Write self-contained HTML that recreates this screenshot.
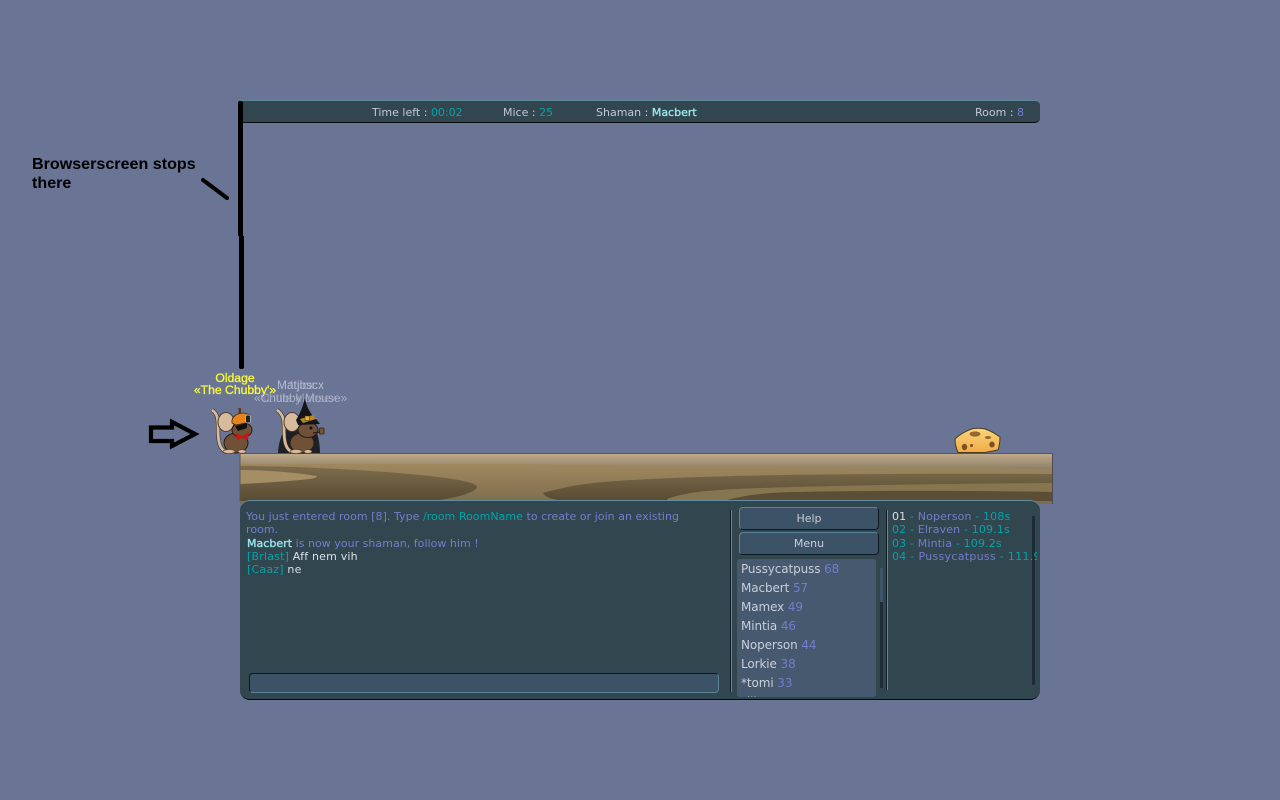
<!DOCTYPE html>
<html><head><meta charset="utf-8"><style>
html,body{margin:0;padding:0;width:1280px;height:800px;overflow:hidden;background:#6a7495}
body{position:relative;font-family:"DejaVu Sans",sans-serif;font-size:11px}
.t{position:absolute;white-space:nowrap;line-height:13px}
.a{position:absolute}
.g{color:#c2c8d6}.c{color:#00a5a7}.b{color:#727dcc}.m{color:#98e6ea;-webkit-text-stroke:.35px #98e6ea}.w{color:#dcdfe8}
.row{position:absolute;left:0;width:139px;height:19px;background:#46596f;border-radius:3px;color:#c8cdda;font-size:12px;letter-spacing:-.1px;line-height:20px;text-indent:4px;white-space:nowrap;overflow:hidden}
.btn{position:absolute;left:739px;width:138px;height:21px;background:#3c5266;border:1px solid #5d8398;border-bottom:1px solid #0c1a22;border-right:1px solid #0c1a22;border-radius:4px;color:#c8cdda;text-align:center;line-height:21px}
.n{font:12.200px/13px "Liberation Sans",sans-serif}
.n2{font:11.900px/13px "Liberation Sans",sans-serif}
</style></head><body>

<!-- top bar -->
<div class="a" style="left:240px;top:100px;width:800px;height:23px;background:#324650;border-top:1px solid #5e8a9e;border-bottom:1px solid #050a0c;border-radius:0 5px 5px 0;box-sizing:border-box"></div>
<div class="t g" style="left:372px;top:106px">Time left : <span class="c">00:02</span></div>
<div class="t g" style="left:503px;top:106px">Mice : <span class="c">25</span></div>
<div class="t g" style="left:596px;top:106px">Shaman : <span class="m">Macbert</span></div>
<div class="t g" style="left:975px;top:106px">Room : <span class="b">8</span></div>

<!-- annotations -->
<div class="a" style="left:238px;top:101px;width:4.500px;height:135px;background:#000;border-radius:2px 2px 0 0"></div>
<div class="a" style="left:239px;top:236px;width:4.500px;height:133px;background:#000;border-radius:0 0 2px 2px"></div>
<div class="t" style="left:32px;top:155px;font:bold 16.100px/19px 'Liberation Sans',sans-serif;color:#000;white-space:normal;width:190px">Browserscreen stops there</div>

<svg class="a" style="left:0;top:0" width="1280" height="800" viewBox="0 0 1280 800">
<line x1="203" y1="180" x2="227" y2="198" stroke="#000" stroke-width="4" stroke-linecap="round"/>
<path d="M151 427.500H172V422L195 434L172 446V441H151Z" fill="none" stroke="#000" stroke-width="4.200"/>

<defs>
<linearGradient id="w" x1="0" y1="0" x2="0" y2="1"><stop offset="0" stop-color="#a88f64"/><stop offset="1" stop-color="#7c6c4b"/></linearGradient>
<linearGradient id="d" gradientUnits="userSpaceOnUse" x1="0" y1="470" x2="0" y2="502"><stop offset="0" stop-color="#7a6a4b"/><stop offset="1" stop-color="#574830"/></linearGradient>
<linearGradient id="t" x1="0" y1="0" x2="0" y2="1"><stop offset="0" stop-color="#bfaa8b"/><stop offset="1" stop-color="#8c7f66"/></linearGradient>
<linearGradient id="ch" x1="0" y1="0" x2="0" y2="1"><stop offset="0" stop-color="#fbd67c"/><stop offset="1" stop-color="#f0ab45"/></linearGradient>
</defs>
<path d="M240 454L1052 454V504L240 504Z" fill="url(#w)"/>
<path d="M240 466C300 466 370 470 420 475C460 479 477 483 477 487C475 493 455 498 433 501H240Z" fill="url(#d)"/>
<path d="M240 470C270 470 300 473 317 476C317 478 312 479 300 480C280 482 260 483 240 484Z" fill="#a58d64"/>
<path d="M1052 474C800 473 680 476 603 482C580 484 560 488 543 493C545 498 558 501 570 501H1052Z" fill="url(#d)"/>
<path d="M1052 483C900 484 760 487 720 490C700 491 680 494 667 499L668 501H1052Z" fill="#87754f"/>
<path d="M1052 492C1000 491 900 490 800 492C770 492 745 495 727 500V501H1052Z" fill="#5c4d35"/>
<path d="M240 454H1052V469C800 466 520 463 240 464Z" fill="url(#t)"/>
<path d="M1052.500 453V504" fill="none" stroke="#4d4a50"/>
<line x1="240" y1="453.500" x2="1053" y2="453.500" stroke="#5a5650"/>
<line x1="240" y1="454" x2="240" y2="501" stroke="#5a5650"/>

<!-- cheese -->
<path d="M955 439C960 434 968 430 973 428.500C978 428 982 428 985 429C991 431 996 434 1000 437C1000 442 999 447 998 450L985 452.500H958C956 448 955 443 955 439Z" fill="url(#ch)" stroke="#4a3a20" stroke-width="1"/>
<ellipse cx="975" cy="434" rx="5.500" ry="2.600" fill="#94682f"/>
<ellipse cx="988" cy="437.500" rx="3.200" ry="1.500" fill="#94682f"/>
<ellipse cx="964.500" cy="447" rx="2.700" ry="3.200" fill="#7c5026"/>
<ellipse cx="971.500" cy="445.500" rx="1.500" ry="1.500" fill="#7c5026"/>
<ellipse cx="992" cy="444.500" rx="2.700" ry="3" fill="#7c5026"/>

<!-- mouse 1 -->
<path d="M212 410C218 414 218 420 218 428C218 440 219 449 226 452" fill="none" stroke="#3c3028" stroke-width="4"/>
<path d="M212 410C218 414 218 420 218 428C218 440 219 449 226 452" fill="none" stroke="#d8b99a" stroke-width="2.800"/>
<ellipse cx="236" cy="443" rx="12" ry="10" fill="#6f5138" stroke="#2a1c12" stroke-width="1"/>
<ellipse cx="226" cy="422" rx="8" ry="9.500" fill="#d8bb9c" stroke="#4e3d30" stroke-width="1"/>
<ellipse cx="242" cy="430" rx="10" ry="7.500" fill="#6f5138" stroke="#2a1c12" stroke-width="1"/>
<path d="M232 423C231 416 238 413 244 413L250 415V422L236 425Z" fill="#e8821c" stroke="#3a2a14" stroke-width=".8"/>
<rect x="245.500" y="415" width="5" height="8" rx="2" fill="#222" stroke="#ccc" stroke-width=".7"/>
<rect x="238.500" y="408" width="2.500" height="5.500" fill="#5a3a1c"/>
<path d="M235 426L247 423L247 428L238 431Z" fill="#111"/>
<path d="M235 433L242 436L249 432L248 440L242 438L237 440Z" fill="#c01a14"/>
<ellipse cx="229" cy="451.500" rx="6" ry="2" fill="#d8b99a" stroke="#4e3d30" stroke-width=".6"/>
<ellipse cx="242" cy="451.500" rx="4" ry="1.800" fill="#d8b99a" stroke="#4e3d30" stroke-width=".6"/>

<!-- mouse 2 -->
<path d="M278 453C279 438 284 426 296 420L312 420C317 430 320 442 320 453Z" fill="#1f1f26"/>
<path d="M277 410C283 414 284 420 284 428C284 440 285 449 292 452" fill="none" stroke="#3c3028" stroke-width="4"/>
<path d="M277 410C283 414 284 420 284 428C284 440 285 449 292 452" fill="none" stroke="#d8b99a" stroke-width="2.800"/>
<ellipse cx="302" cy="443" rx="12" ry="10" fill="#6f5138" stroke="#2a1c12" stroke-width="1"/>
<ellipse cx="292" cy="422" rx="8" ry="9.500" fill="#d8bb9c" stroke="#4e3d30" stroke-width="1"/>
<ellipse cx="308" cy="430" rx="10" ry="7.500" fill="#6f5138" stroke="#2a1c12" stroke-width="1"/>
<path d="M305 398C306 406 311 415 316 419L320 424L298 425L296 420C300 414 303 406 305 398Z" fill="#151518"/>
<path d="M300 419L313 415L316 419L303 423Z" fill="#b98524"/>
<rect x="305" y="416" width="4.500" height="4.500" fill="#e0b040" stroke="#3a2a14" stroke-width=".5"/>
<circle cx="311" cy="428" r="1.500" fill="#111"/>
<path d="M313 433L320 432" stroke="#2a1c10" stroke-width="1.200"/>
<rect x="319.500" y="428" width="4.500" height="6" rx="1" fill="#7a5230" stroke="#2a1c10" stroke-width=".7"/>
<ellipse cx="296" cy="451.500" rx="6" ry="2" fill="#d8b99a" stroke="#4e3d30" stroke-width=".6"/>
<ellipse cx="308" cy="451.500" rx="4" ry="1.800" fill="#d8b99a" stroke="#4e3d30" stroke-width=".6"/>
</svg>

<!-- names -->
<div class="t n" style="left:175px;top:372px;width:120px;text-align:center;color:#f5f53c;-webkit-text-stroke:.35px #f5f53c">Oldage</div>
<div class="t n" style="left:175px;top:384px;width:120px;text-align:center;color:#f5f53c;-webkit-text-stroke:.35px #f5f53c">«The Chubby'»</div>
<div class="t n2" style="left:277px;top:379px;color:#b6bbd2">Matjbscx</div>
<div class="t n2" style="left:289px;top:379px;color:#b6bbd2;opacity:.6">*tjlcx</div>
<div class="t n2" style="left:254px;top:392px;color:#b6bbd2;opacity:.85">«Chubby Mouse»</div>
<div class="t n2" style="left:260px;top:392px;color:#b6bbd2;opacity:.5">«Little Moose»</div>

<!-- main panel -->
<div class="a" style="left:240px;top:500px;width:800px;height:200px;background:#324650;border-top:1px solid #5e8ea6;border-bottom:1px solid #050a0c;border-radius:10px;box-sizing:border-box"></div>

<div class="t b" style="left:246px;top:510px;width:450px;white-space:normal;letter-spacing:.04px">You just entered room [8]. Type <span class="c">/room RoomName</span> to create or join an existing room.</div>
<div class="t b" style="left:247px;top:537px;letter-spacing:.03px"><span class="m">Macbert</span> is now your shaman, follow him !</div>
<div class="t w" style="left:247px;top:550px;letter-spacing:.2px"><span class="c">[Brlast]</span> Aff nem vih</div>
<div class="t w" style="left:247px;top:563px;letter-spacing:.2px"><span class="c">[Caaz]</span> ne</div>

<!-- input -->
<div class="a" style="left:249px;top:673px;width:470px;height:20px;background:#3c5266;border:1px solid #5d8398;border-top:1px solid #0c1a22;border-left:1px solid #0c1a22;border-radius:4px;box-sizing:border-box"></div>

<!-- dividers -->
<div class="a" style="left:730px;top:510px;width:2px;height:182px;background:linear-gradient(90deg,#0e1c24 50%,#5d8ba0 50%)"></div>
<div class="a" style="left:886px;top:510px;width:2px;height:180px;background:linear-gradient(90deg,#0e1c24 50%,#5d8ba0 50%)"></div>

<!-- buttons -->
<div class="btn" style="top:507px">Help</div>
<div class="btn" style="top:532px">Menu</div>

<!-- player list -->
<div class="a" style="left:737px;top:559px;width:139px;height:138px;overflow:hidden;background:#46596f;border-radius:3px">
<div class="row" style="top:0"><span>Pussycatpuss <span class="b">68</span></span></div>
<div class="row" style="top:19px"><span>Macbert <span class="b">57</span></span></div>
<div class="row" style="top:38px"><span>Mamex <span class="b">49</span></span></div>
<div class="row" style="top:57px"><span>Mintia <span class="b">46</span></span></div>
<div class="row" style="top:76px"><span>Noperson <span class="b">44</span></span></div>
<div class="row" style="top:95px"><span>Lorkie <span class="b">38</span></span></div>
<div class="row" style="top:114px"><span>*tomi <span class="b">33</span></span></div>
<div class="row" style="top:133px"><span>*ilbe <span class="b">32</span></span></div>
</div>
<!-- scrollbars -->
<div class="a" style="left:880px;top:568px;width:3px;height:34px;background:#3e5468"></div>
<div class="a" style="left:880px;top:602px;width:3px;height:86px;background:#1d2c36"></div>
<div class="a" style="left:1032px;top:516px;width:3px;height:169px;background:#1d2c36"></div>

<!-- scores -->
<div class="a" style="left:892px;top:510px;width:145px;height:60px;overflow:hidden;letter-spacing:.15px">
<div class="t c" style="left:0;top:0"><span class="w">01</span> - <span class="b">Noperson</span> - 108s</div>
<div class="t c" style="left:0;top:13px">02 - <span class="b">Elraven</span> - 109.1s</div>
<div class="t c" style="left:0;top:27px">03 - <span class="b">Mintia</span> - 109.2s</div>
<div class="t c" style="left:0;top:40px;letter-spacing:.3px">04 - <span class="b">Pussycatpuss</span> - 111.9s</div>
</div>
</body></html>
